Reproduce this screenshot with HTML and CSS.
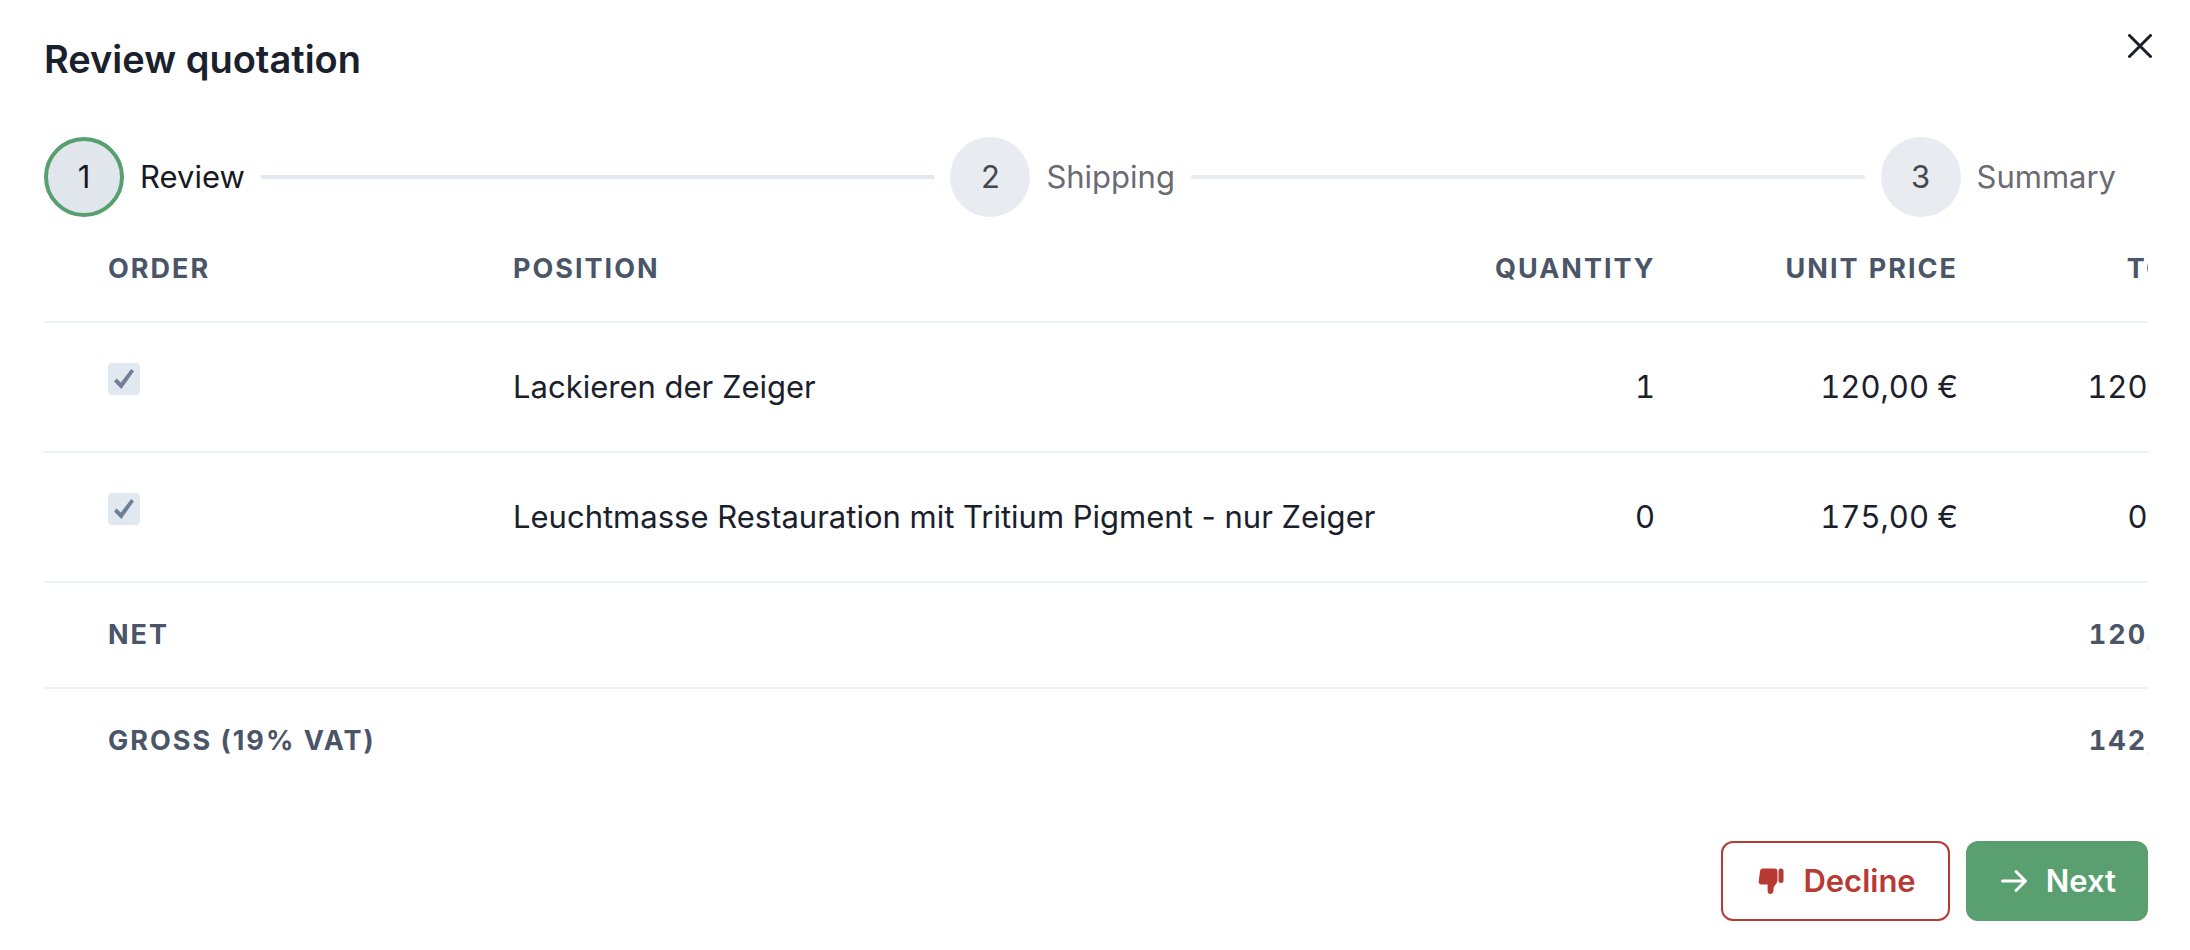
FILE: index.html
```html
<!DOCTYPE html>
<html lang="en">
<head>
  <meta charset="UTF-8">
  <meta name="viewport" content="width=device-width, initial-scale=1.0">
  <title>Review quotation</title>
  <link rel="stylesheet" href="styles.css">
</head>
<body>
  <main class="modal">
    <header class="modal-header">
      <h1>Review quotation</h1>
      <button class="close" type="button" aria-label="Close">
        <svg viewBox="0 0 24 24" width="24" height="24" aria-hidden="true"><path d="M1.5 1.5 22.500 22.500M22.500 1.500 1.500 22.500"/></svg>
      </button>
    </header>

    <ol class="stepper">
      <li class="step active" aria-current="step">
        <span class="indicator">1</span>
        <span class="step-title">Review</span>
        <span class="separator"></span>
      </li>
      <li class="step">
        <span class="indicator">2</span>
        <span class="step-title">Shipping</span>
        <span class="separator"></span>
      </li>
      <li class="step">
        <span class="indicator">3</span>
        <span class="step-title">Summary</span>
      </li>
    </ol>

    <div class="table-container">
      <table>
        <colgroup>
          <col class="col-order">
          <col class="col-position">
          <col class="col-quantity">
          <col class="col-price">
          <col class="col-total">
        </colgroup>
        <thead>
          <tr>
            <th scope="col">Order</th>
            <th scope="col">Position</th>
            <th scope="col" class="numeric">Quantity</th>
            <th scope="col" class="numeric">Unit price</th>
            <th scope="col" class="numeric">Total</th>
          </tr>
        </thead>
        <tbody>
          <tr>
            <td><input type="checkbox" class="checkbox" aria-labelledby="position-1" checked disabled></td>
            <td id="position-1">Lackieren der Zeiger</td>
            <td class="numeric">1</td>
            <td class="numeric">120,00 €</td>
            <td class="numeric">120,00 €</td>
          </tr>
          <tr>
            <td><input type="checkbox" class="checkbox" aria-labelledby="position-2" checked disabled></td>
            <td id="position-2">Leuchtmasse Restauration mit Tritium Pigment - nur Zeiger</td>
            <td class="numeric">0</td>
            <td class="numeric">175,00 €</td>
            <td class="numeric">0,00 €</td>
          </tr>
        </tbody>
        <tfoot>
          <tr>
            <th scope="row">Net</th>
            <th></th>
            <th></th>
            <th></th>
            <th class="numeric">120,00 €</th>
          </tr>
          <tr>
            <th scope="row">Gross (19% VAT)</th>
            <th></th>
            <th></th>
            <th></th>
            <th class="numeric">142,80 €</th>
          </tr>
        </tfoot>
      </table>
    </div>

    <footer class="modal-footer">
      <button class="button decline" type="button">
        <svg viewBox="0 0 32 32" width="32" height="32" fill="currentColor" aria-hidden="true">
          <path d="M8 3.5h11.500a3 3 0 0 1 3 3V15c0 1.500-.4 2.600-1.300 3.700l-1.700 2.200c-.5.700-.8 1.500-.9 2.400l-.2 2.400c-.1 1.900-1.200 3.300-2.900 3.300s-2.900-1.300-2.900-3v-6.500H6.500c-2 0-3.100-1.400-2.800-3.300L5 6.200C5.300 4.500 6.400 3.500 8 3.500z"/>
          <rect x="23.500" y="3.500" width="5" height="14.500" rx="2.500"/>
        </svg>
        Decline
      </button>
      <button class="button next" type="button">
        <svg viewBox="0 0 32 32" width="32" height="32" fill="none" stroke="currentColor" stroke-width="3" stroke-linecap="round" stroke-linejoin="round" aria-hidden="true">
          <path d="M4.500 16h23M18 6.500l9.500 9.500-9.500 9.500"/>
        </svg>
        Next
      </button>
    </footer>
  </main>
</body>
</html>
```

FILE: styles.css
```css
* { box-sizing: border-box; }
body { margin: 0; background: #fff; color: #1a202c; font-family: Inter, "Liberation Sans", sans-serif; font-size: 31px; line-height: 48px; }
button { font: inherit; cursor: pointer; }

.modal { padding: 29px 42px 28px 44px; }

.modal-header { display: flex; justify-content: space-between; align-items: flex-start; margin-bottom: 48px; }
.modal-header h1 { margin: 0; font-size: 38px; font-weight: 600; line-height: 60px; }
.close { display: flex; padding: 5px; margin-right: -9px; border: 0; background: none; color: inherit; }
.close svg { fill: none; stroke: currentColor; stroke-width: 3; stroke-linecap: round; }

.stepper { display: flex; gap: 16px; margin: 0; padding: 0 32px 0 0; list-style: none; }
.step { display: flex; flex: 1 1 auto; align-items: center; gap: 16px; color: #6b6b73; }
.step:last-child { flex: none; }
.indicator { display: flex; justify-content: center; align-items: center; width: 80px; height: 80px; border-radius: 50%; background: #e8ebf0; color: #45484f; }
.separator { flex: 1; height: 4px; background: #e8ebf0; }
.step.active { color: #171923; }
.active .indicator { border: 4px solid #589f6f; background: #e1e6ed; color: #171923; }
.active .separator { background: #e2e8f0; }

/* the table is wider than the modal and scrolls sideways */
.table-container { overflow-x: auto; scrollbar-width: none; white-space: nowrap; }
table { width: 100%; table-layout: fixed; border-collapse: collapse; }
.col-order { width: 405px; }
.col-position { width: 982px; }
.col-quantity { width: 288px; }
.col-price { width: 303px; }
.col-total { width: 267px; }
th, td { padding: 40px 64px; border-bottom: 2px solid #edf2f7; text-align: left; }
th { padding: 32px 64px; color: #4a5568; font-size: 27px; font-weight: 700; line-height: 40px; letter-spacing: 2px; text-transform: uppercase; }
tfoot tr:last-child th { border-bottom: 0; }
.numeric { text-align: right; font-variant-numeric: tabular-nums; }

.checkbox { display: inline-grid; place-content: center; appearance: none; width: 32px; height: 32px; margin: 0; border-radius: 4px; background: #e2e8f0; vertical-align: top; }
.checkbox::before { content: ""; width: 20px; height: 20px; background: #718096; clip-path: polygon(0 62%, 13% 47%, 34% 67%, 86% 0, 100% 11%, 37% 100%); }

.modal-footer { display: flex; justify-content: flex-end; gap: 16px; margin-top: 48px; }
.button { display: flex; align-items: center; gap: 16px; height: 80px; padding: 0 32px; border: 0; border-radius: 12px; font-weight: 600; }
.decline { border: 2px solid #b83a34; background: none; color: #b83a34; }
.next { background: #5a9f70; color: #fff; }
```
